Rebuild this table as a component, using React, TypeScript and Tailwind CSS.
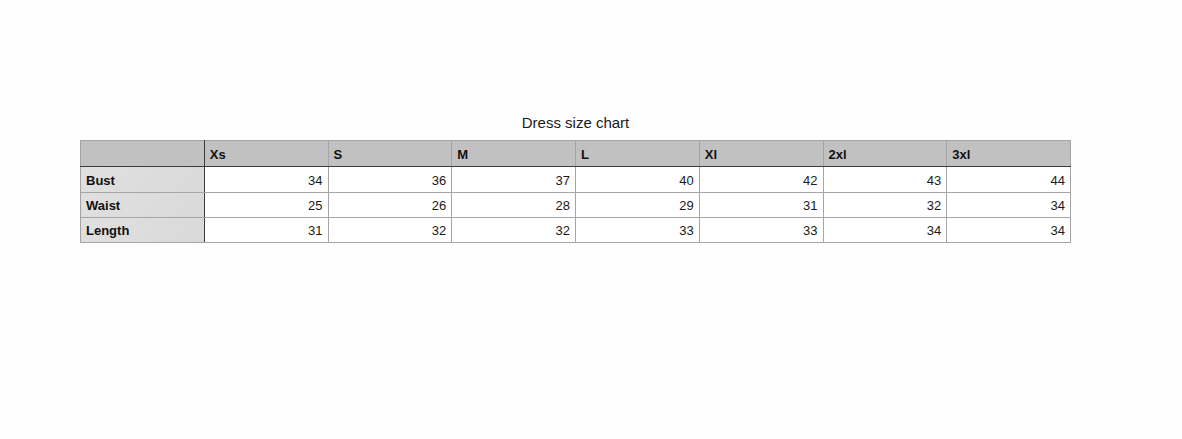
import React from "react";

const sizes = ["Xs", "S", "M", "L", "Xl", "2xl", "3xl"];
const rows: { label: string; values: number[]; h: string }[] = [
  { label: "Bust", values: [34, 36, 37, 40, 42, 43, 44], h: "h-[26px]" },
  { label: "Waist", values: [25, 26, 28, 29, 31, 32, 34], h: "h-[25px]" },
  { label: "Length", values: [31, 32, 32, 33, 33, 34, 34], h: "h-[25px]" },
];

export default function App() {
  return (
    <div
      className="w-[1182px] h-[439px] bg-[#fefefe] text-[#111]"
      style={{ fontFamily: '"Liberation Sans", Arial, sans-serif' }}
    >
      <div className="pt-[114px] pl-[80px] w-[1071px]">
        <div className="text-center text-[15px] leading-[18px] text-[#1a1a1a] mb-[8px]">
          Dress size chart
        </div>
        <table className="border-collapse table-fixed w-[991px] text-[13px]">
          <colgroup>
            {Array.from({ length: 8 }).map((_, i) => (
              <col key={i} />
            ))}
          </colgroup>
          <thead>
            <tr className="h-[26px] bg-[#c0c1c0]">
              <th className="border border-[#a5a5a5] border-b-[#3c3c3c] border-r-[#3c3c3c] px-[5px] text-left font-bold bg-[#c0c1c0]"></th>
              {sizes.map((s) => (
                <th
                  key={s}
                  className="border border-[#a5a5a5] border-b-[#3c3c3c] px-[5px] pt-[3px] pb-0 text-left font-bold"
                >
                  {s}
                </th>
              ))}
            </tr>
          </thead>
          <tbody>
            {rows.map((r) => (
              <tr key={r.label} className={r.h}>
                <td className="border border-[#a5a5a5] border-r-[#3c3c3c] px-[5px] pt-[2px] pb-0 text-left font-bold bg-[linear-gradient(135deg,#e0e0e0,#d9d9d9)]">
                  {r.label}
                </td>
                {r.values.map((v, i) => (
                  <td
                    key={i}
                    className="border border-[#a5a5a5] px-[5px] pt-[2px] pb-0 text-right bg-white text-[#1a1a1a]"
                  >
                    {v}
                  </td>
                ))}
              </tr>
            ))}
          </tbody>
        </table>
      </div>
    </div>
  );
}
